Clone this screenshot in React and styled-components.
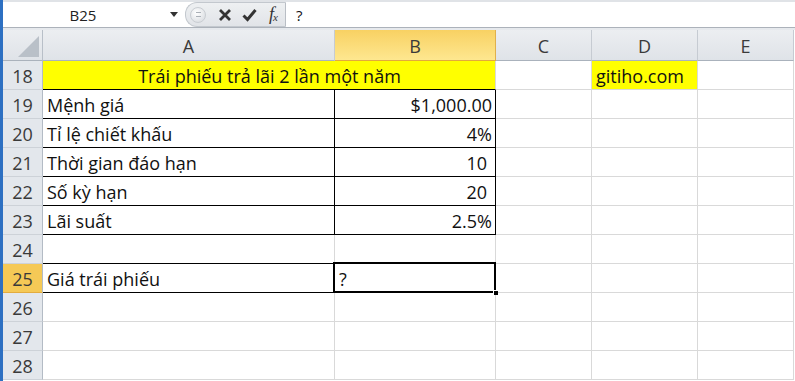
import React from "react";
import styled, { createGlobalStyle, css } from "styled-components";

const GlobalStyle = createGlobalStyle`
  html, body { margin: 0; padding: 0; background: #fff; overflow: hidden; }
  body { font-family: "Open Sans", "Liberation Sans", sans-serif; }
`;

const Window = styled.div`
  display: flex;
  width: 795px;
  height: 381px;
  overflow: hidden;
  background: #fff;
`;

const EdgeStrip = styled.div`
  flex: none;
  width: 3px;
  background: #2d70c2;
`;

const Main = styled.div`
  flex: 1;
  min-width: 0;
  display: flex;
  flex-direction: column;
`;

const FormulaBar = styled.div`
  box-sizing: border-box;
  height: 28px;
  display: flex;
  border-top: 2px solid #e0e3e7;
  border-bottom: 1px solid #acb2ba;
  background: #fff;
`;

const NameBox = styled.div`
  flex: none;
  width: 182px;
  display: flex;
  align-items: center;
`;

const NameText = styled.div`
  width: 160px;
  text-align: center;
  font-size: 15px;
  color: #222;
  padding-top: 1px;
`;

const DropArrow = styled.div`
  width: 22px;
  display: flex;
  justify-content: center;
  &::after {
    content: "";
    border-left: 4px solid transparent;
    border-right: 4px solid transparent;
    border-top: 5px solid #333;
  }
`;

const FxPill = styled.div`
  box-sizing: border-box;
  flex: none;
  width: 101px;
  display: flex;
  align-items: center;
  background: linear-gradient(#eef0f2, #e1e4e8);
  border: 1px solid #c3c8ce;
  border-right-color: #b9bec5;
  border-radius: 12px 0 0 12px;
  padding-left: 4px;
`;

const Grip = styled.div`
  width: 14px;
  height: 14px;
  border-radius: 50%;
  background: radial-gradient(circle at 40% 35%, #ffffff, #d3d7dc);
  border: 1px solid #c9cdd2;
  margin-right: 7px;
  display: flex;
  align-items: center;
  justify-content: center;
  &::after {
    content: "";
    width: 5px;
    height: 3px;
    border-top: 1px solid #aab0b7;
    border-bottom: 1px solid #aab0b7;
  }
`;

const IconSlot = styled.div`
  width: 24px;
  display: flex;
  align-items: center;
  justify-content: center;
`;

const FxText = styled.span`
  font-family: "Liberation Serif", "DejaVu Serif", serif;
  font-style: italic;
  font-size: 18px;
  color: #333;
  letter-spacing: -1px;
  & sub {
    font-size: 11px;
    vertical-align: -1px;
  }
`;

const FormulaInput = styled.div`
  flex: 1;
  display: flex;
  align-items: center;
  padding-left: 10px;
  font-size: 15px;
  color: #111;
`;

const Spacer = styled.div`
  height: 2px;
  background: #e6e9ed;
`;

const Sheet = styled.div`
  display: grid;
  grid-template-columns: 40px 292px 161px 96px 106px 96px;
  grid-template-rows: 31px repeat(11, 29px);
  font-size: 18px;
  color: #111;
`;

const Corner = styled.div`
  box-sizing: border-box;
  position: relative;
  background: linear-gradient(#eceef1, #dfe3e8);
  border-right: 1px solid #b8bfc8;
  border-bottom: 1px solid #aab2bc;
  &::after {
    content: "";
    position: absolute;
    right: 3px;
    bottom: 3px;
    width: 21px;
    height: 21px;
    background: #b9c0c8;
    clip-path: polygon(100% 0, 100% 100%, 0 100%);
  }
`;

const ColHead = styled.div`
  box-sizing: border-box;
  display: flex;
  align-items: center;
  justify-content: center;
  color: #3a3a3a;
  background: linear-gradient(#eceef1, #dfe3e8);
  border-right: 1px solid #c6cbd2;
  border-bottom: 1px solid #aab2bc;
  padding-top: 1px;
  ${(p) =>
    p.$active &&
    css`
      background: linear-gradient(#f8d163, #fee790);
      border-right-color: #e0b04c;
      border-bottom-color: #e3a93c;
    `}
`;

const RowHead = styled.div`
  box-sizing: border-box;
  display: flex;
  align-items: center;
  justify-content: center;
  color: #3a3a3a;
  background: #e3e7ec;
  border-right: 1px solid #b3bbc5;
  border-bottom: 1px solid #cdd2d8;
  padding-top: 2px;
  ${(p) =>
    p.$active &&
    css`
      background: #f5c956;
      border-bottom-color: #e3ac3e;
    `}
`;

const Cell = styled.div`
  box-sizing: border-box;
  display: flex;
  align-items: center;
  justify-content: ${(p) =>
    p.$align === "right" ? "flex-end" : p.$align === "center" ? "center" : "flex-start"};
  padding: 2px ${(p) => (p.$pr != null ? p.$pr : 3)}px 0 4px;
  white-space: nowrap;
  overflow: hidden;
  background: ${(p) => p.$bg || "#fff"};
  border-right: 1px solid ${(p) => (p.$br ? "#000" : "#d9d9d9")};
  border-bottom: 1px solid ${(p) => (p.$bb ? "#000" : "#d9d9d9")};
  ${(p) => p.$span && css`grid-column: span ${p.$span};`}
`;

const SelectedCell = styled(Cell)`
  position: relative;
  overflow: visible;
  z-index: 1;
  &::before {
    content: "";
    position: absolute;
    top: -2px;
    left: -2px;
    right: -1px;
    bottom: -1px;
    border: 2px solid #000;
    pointer-events: none;
  }
  &::after {
    content: "";
    position: absolute;
    right: -3px;
    bottom: -3px;
    width: 4px;
    height: 4px;
    background: #000;
    border-left: 1px solid #fff;
    border-top: 1px solid #fff;
  }
`;

const XIcon = () => (
  <svg width="14" height="14" viewBox="0 0 14 14">
    <path d="M2 2 L12 12 M12 2 L2 12" stroke="#333" strokeWidth="2.8" strokeLinecap="butt" />
  </svg>
);

const CheckIcon = () => (
  <svg width="15" height="14" viewBox="0 0 15 14">
    <path d="M1.5 7.5 L5.5 11.5 L13.5 2" stroke="#333" strokeWidth="3" fill="none" strokeLinejoin="miter" />
  </svg>
);

const YELLOW = "#ffff00";

const tableRows = [
  { n: 19, a: "Mệnh giá", b: "$1,000.00" },
  { n: 20, a: "Tỉ lệ chiết khấu", b: "4%" },
  { n: 21, a: "Thời gian đáo hạn", b: "10", pr: 8 },
  { n: 22, a: "Số kỳ hạn", b: "20", pr: 8 },
  { n: 23, a: "Lãi suất", b: "2.5%" },
];

const cols = ["A", "B", "C", "D", "E"];

function EmptyTail({ count = 3 }) {
  return Array.from({ length: count }, (_, i) => <Cell key={i} />);
}

export default function App() {
  return (
    <>
      <GlobalStyle />
      <Window>
        <EdgeStrip />
        <Main>
          <FormulaBar>
            <NameBox>
              <NameText>B25</NameText>
              <DropArrow />
            </NameBox>
            <FxPill>
              <Grip />
              <IconSlot>
                <XIcon />
              </IconSlot>
              <IconSlot>
                <CheckIcon />
              </IconSlot>
              <IconSlot>
                <FxText>
                  f<sub>x</sub>
                </FxText>
              </IconSlot>
            </FxPill>
            <FormulaInput>?</FormulaInput>
          </FormulaBar>
          <Spacer />
          <Sheet>
            <Corner />
            {cols.map((c) => (
              <ColHead key={c} $active={c === "B"}>
                {c}
              </ColHead>
            ))}

            <RowHead>18</RowHead>
            <Cell $span={2} $align="center" $bg={YELLOW} $bb>
              Trái phiếu trả lãi 2 lần một năm
            </Cell>
            <Cell />
            <Cell $bg={YELLOW}>gitiho.com</Cell>
            <Cell />

            {tableRows.map((r) => (
              <React.Fragment key={r.n}>
                <RowHead>{r.n}</RowHead>
                <Cell $bb $br>
                  {r.a}
                </Cell>
                <Cell $bb $br $align="right" $pr={r.pr}>
                  {r.b}
                </Cell>
                <EmptyTail />
              </React.Fragment>
            ))}

            <RowHead>24</RowHead>
            <Cell $bb />
            <Cell $bb />
            <EmptyTail />

            <RowHead $active>25</RowHead>
            <Cell $bb $br>
              Giá trái phiếu
            </Cell>
            <SelectedCell $bb $br>
              ?
            </SelectedCell>
            <EmptyTail />

            {[26, 27, 28].map((n) => (
              <React.Fragment key={n}>
                <RowHead>{n}</RowHead>
                <Cell />
                <Cell />
                <EmptyTail />
              </React.Fragment>
            ))}
          </Sheet>
        </Main>
      </Window>
    </>
  );
}
